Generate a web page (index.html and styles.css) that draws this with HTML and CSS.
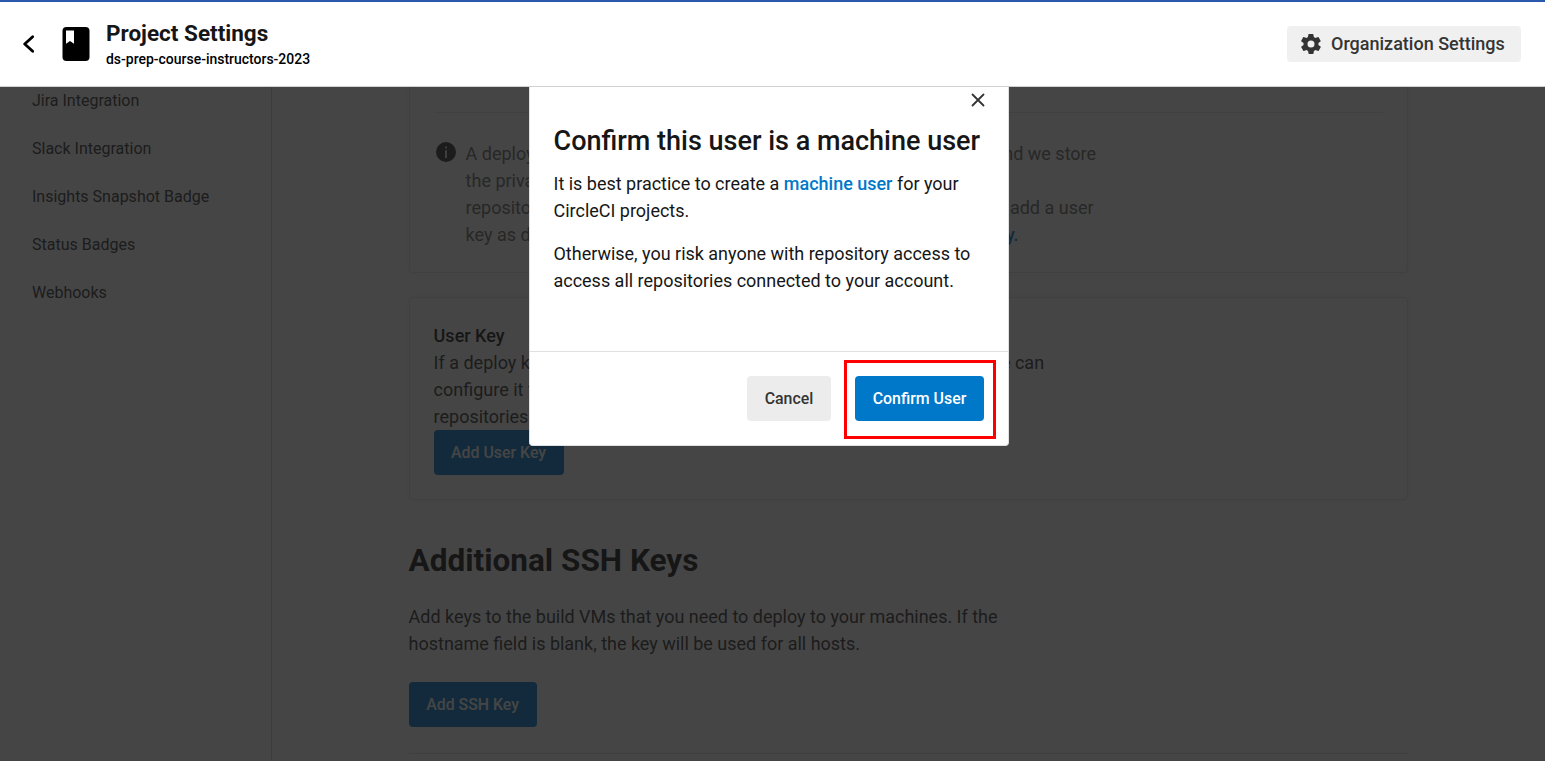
FILE: index.html
```
<!DOCTYPE html>
<html lang="en">
<head>
<meta charset="utf-8">
<title>Project Settings</title>
<link rel="stylesheet" href="styles.css">
</head>
<body>
<div class="app">
  <header class="header">
    <svg class="back" width="12" height="20" viewBox="0 0 12 20"><path d="M10.700 2.700 2.700 10l8 7.300" fill="none" stroke="#000" stroke-width="2.8" stroke-linecap="round" stroke-linejoin="round"/></svg>
    <svg class="book" width="28" height="34" viewBox="0 0 28 34"><rect x=".5" width="27" height="34" rx="4"/><path d="M4 3.600h8v13.200l-4-2.800-4 2.800z" fill="#fff"/></svg>
    <div class="titles">
      <h1 class="title">Project Settings</h1>
      <div class="project">ds-prep-course-instructors-2023</div>
    </div>
    <button class="org-settings">
      <svg width="24" height="24" viewBox="0 0 24 24"><path fill="#343434" d="M19.4 13c0-.3.1-.6.1-1s0-.7-.1-1l2.1-1.600c.2-.2.3-.4.1-.7l-2-3.400c-.1-.2-.4-.3-.6-.2l-2.500 1c-.5-.4-1.100-.7-1.700-1l-.4-2.600c0-.3-.2-.5-.5-.5h-4c-.2 0-.5.2-.5.4l-.4 2.700c-.6.2-1.100.6-1.700 1l-2.500-1c-.2-.1-.5 0-.6.2l-2 3.400c-.1.3 0 .5.2.7L4.600 11c0 .3-.1.6-.1 1s0 .7.1 1l-2.200 1.600c-.2.2-.2.4-.1.7l2 3.400c.1.2.4.3.6.2l2.500-1c.5.4 1.100.7 1.700 1l.4 2.600c0 .3.2.5.5.5h4c.3 0 .5-.2.5-.4l.4-2.700c.6-.2 1.200-.6 1.700-1l2.500 1c.2.1.5 0 .6-.2l2-3.400c.1-.3.100-.5-.1-.7zM12 15.500a3.500 3.500 0 1 1 0-7 3.500 3.500 0 0 1 0 7z"/></svg>
      <span class="org-label">Organization Settings</span>
    </button>
  </header>
  <div class="body">
    <nav class="sidebar">
      <a class="nav-item">Jira Integration</a>
      <a class="nav-item">Slack Integration</a>
      <a class="nav-item">Insights Snapshot Badge</a>
      <a class="nav-item">Status Badges</a>
      <a class="nav-item">Webhooks</a>
    </nav>
    <main class="main">
      <section class="card deploy-card">
        <div class="info">
          <svg class="info-icon" width="20" height="20" viewBox="0 0 20 20"><circle cx="10" cy="10" r="10" fill="#343434"/><path d="M9 4.500h2v2H9zM9 8.300h2V16H9z" fill="#ddd"/></svg>
          <div class="info-text">
            <div class="line first"><span>A deploy</span><span>and we store</span></div>
            <div class="line"><span>the private</span></div>
            <div class="line third"><span>repository</span><span>add a user</span></div>
            <div class="line fourth"><span>key as de</span><b class="link">key.</b></div>
          </div>
        </div>
      </section>
      <section class="card user-card">
        <div class="card-title">User Key</div>
        <div class="line wide"><span>If a deploy key</span><span>we can</span></div>
        <div class="line"><span>configure it to</span></div>
        <div class="line"><span>repositories</span></div>
        <button class="btn primary add-user">Add User Key</button>
      </section>
      <section class="ssh">
        <h2 class="ssh-title">Additional SSH Keys</h2>
        <p class="ssh-text">Add keys to the build VMs that you need to deploy to your machines. If the hostname field is blank, the key will be used for all hosts.</p>
        <button class="btn primary add-ssh">Add SSH Key</button>
      </section>
    </main>
    <div class="overlay">
      <div class="modal">
        <div class="modal-body">
          <svg class="close" width="14" height="14" viewBox="0 0 14 14"><path d="M1.500 1.500l11 11M12.500 1.500l-11 11" stroke="#343434" stroke-width="1.800" stroke-linecap="round"/></svg>
          <h3 class="modal-title">Confirm this user is a machine user</h3>
          <p class="modal-text">It is best practice to create a <a class="link">machine user</a> for your CircleCI projects.</p>
          <p class="modal-text">Otherwise, you risk anyone with repository access to access all repositories connected to your account.</p>
        </div>
        <div class="modal-footer">
          <button class="btn cancel">Cancel</button>
          <div class="highlight"><button class="btn primary confirm">Confirm User</button></div>
        </div>
      </div>
    </div>
  </div>
</div>
</body>
</html>
```
FILE: styles.css
```
* { box-sizing: border-box; }
body { margin: 0; font-family: Roboto, "Liberation Sans", sans-serif; color: #161616; }
h1, h2, h3, p { margin: 0; }
button { font-family: inherit; border: 0; padding: 0; }
svg { display: block; flex: none; }
.app { height: 761px; overflow: hidden; display: flex; flex-direction: column; }

.header { height: 87px; flex: none; display: flex; align-items: center; padding: 0 24px 0 22px; border-top: 2px solid #2b59ad; border-bottom: 1px solid #cfd1d1; background: #fff; }
.book { margin-left: 28px; }
.titles { margin-left: 16px; flex: 1; }
.title { font-size: 22.5px; line-height: 28px; font-weight: 700; }
.project { font-size: 13.97px; line-height: 20px; font-weight: 500; color: #000; margin-top: 2px; }
.org-settings { width: 234px; height: 36px; display: flex; align-items: center; gap: 8px; padding-left: 12px; border-radius: 4px; background: #f0f0f0; color: #343434; font-size: 18px; font-weight: 500; white-space: nowrap; }
.org-label { padding-bottom: 2px; }

.body { flex: 1; display: flex; position: relative; min-height: 0; overflow: hidden; }
.sidebar { width: 272px; flex: none; border-right: 1px solid #d8d8d8; display: flex; flex-direction: column; }
.nav-item { height: 48px; flex: none; line-height: 48px; padding-left: 32px; font-size: 16px; color: #343434; }
.nav-item:first-child { height: 38px; line-height: 28px; }
.main { width: 1136px; flex: none; padding-left: 136.6px; }
.card { border: 1px solid #e3e3e3; border-radius: 4px; padding: 0 24px; box-shadow: 0 0 8px rgba(0,0,0,.06); font-size: 18px; color: #343434; }
.deploy-card { height: 186px; border-top: 0; border-radius: 0 0 4px 4px; padding-top: 25px; }
.info { border-top: 1px solid #e3e3e3; padding: 27px 0 0 2px; display: flex; gap: 10px; color: #6a6a6a; }
.info-icon { margin-top: 2px; }
.line { display: flex; justify-content: space-between; line-height: 27px; height: 27px; }
.first { width: 630.5px; }
.third { width: 628px; }
.fourth { width: 553px; }
.link { color: #0078ca; font-weight: 500; }
.user-card { height: 203px; margin-top: 24px; padding-top: 24px; }
.card-title { font-weight: 500; line-height: 27px; color: #161616; }
.wide { width: 610.5px; }
.btn { height: 45px; border-radius: 4px; font-size: 15.9px; font-weight: 500; flex: none; }
.primary { background: #0078ca; color: #fff; }
.add-user { width: 130px; display: block; }
.ssh { height: 254px; padding-top: 41px; border-bottom: 1px solid #e0e0e0; }
.ssh-title { font-size: 31.5px; line-height: 40px; font-weight: 700; }
.ssh-text { width: 610px; font-size: 17.98px; line-height: 27px; color: #343434; margin: 22px 0 25px; }
.add-ssh { width: 128px; display: block; }

.overlay { position: absolute; inset: 0; background: rgba(22,22,22,.8); }
.modal { width: 480px; height: 359px; margin-left: 529px; background: #fff; border: 1px solid #dfe0e1; border-top: 0; border-radius: 0 0 4px 4px; display: flex; flex-direction: column; }
.modal-body { height: 264px; padding: 6px 23px 0 23.5px; display: flex; flex-direction: column; }
.close { align-self: flex-end; }
.modal-title { font-size: 27px; line-height: 36px; font-weight: 500; margin-top: 16px; white-space: nowrap; }
.modal-text { font-size: 17.98px; line-height: 27px; margin: 11px 0 5px; }
.modal-footer { flex: 1; border-top: 1px solid #dfe0e1; display: flex; align-items: flex-start; justify-content: flex-end; padding: 8px 12px 0 0; gap: 13px; }
.cancel { width: 84px; margin-top: 16px; background: #ececec; color: #343434; }
.highlight { width: 152px; height: 79px; border: 3px solid #f00; padding: 13px 8px; }
.confirm { width: 129px; display: block; }
```
